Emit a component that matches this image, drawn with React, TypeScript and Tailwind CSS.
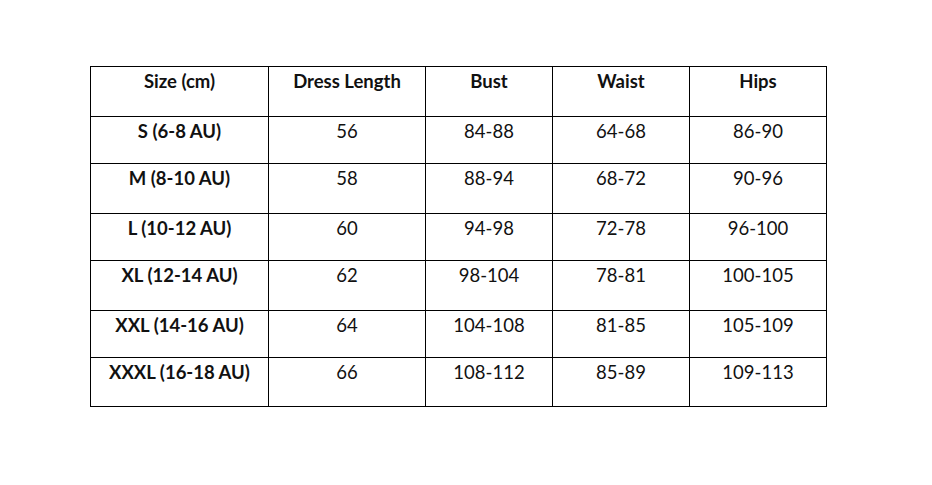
const headers = ['Size (cm)', 'Dress Length', 'Bust', 'Waist', 'Hips']

const rows = [
  ['S (6-8 AU)', '56', '84-88', '64-68', '86-90'],
  ['M (8-10 AU)', '58', '88-94', '68-72', '90-96'],
  ['L (10-12 AU)', '60', '94-98', '72-78', '96-100'],
  ['XL (12-14 AU)', '62', '98-104', '78-81', '100-105'],
  ['XXL (14-16 AU)', '64', '104-108', '81-85', '105-109'],
  ['XXXL (16-18 AU)', '66', '108-112', '85-89', '109-113'],
]

const widths = ['w-[178px]', 'w-[157px]', 'w-[127px]', 'w-[137px]', 'w-[137px]']
const heights = ['h-[47px]', 'h-[50px]', 'h-[47px]', 'h-[50px]', 'h-[47px]', 'h-[49px]']

export default function App() {
  return (
    <div className="w-[932px] h-[485px] bg-white pl-[90px] pt-[66px] font-['Lato','Open_Sans',sans-serif] text-[18.5px] text-[#111]">
      <table className="border-collapse table-fixed">
        <thead>
          <tr className="h-[50px]">
            {headers.map((h, i) => (
              <th key={h} className={`${widths[i]} border border-black align-top pt-[4px] text-center font-bold leading-5`}>
                {h}
              </th>
            ))}
          </tr>
        </thead>
        <tbody>
          {rows.map((r, ri) => (
            <tr key={r[0]} className={heights[ri]}>
              {r.map((c, ci) => (
                <td
                  key={ci}
                  className={`border border-black align-top pt-[4px] text-center leading-5 ${ci === 0 ? 'font-bold' : 'font-normal'}`}
                >
                  {c}
                </td>
              ))}
            </tr>
          ))}
        </tbody>
      </table>
    </div>
  )
}
